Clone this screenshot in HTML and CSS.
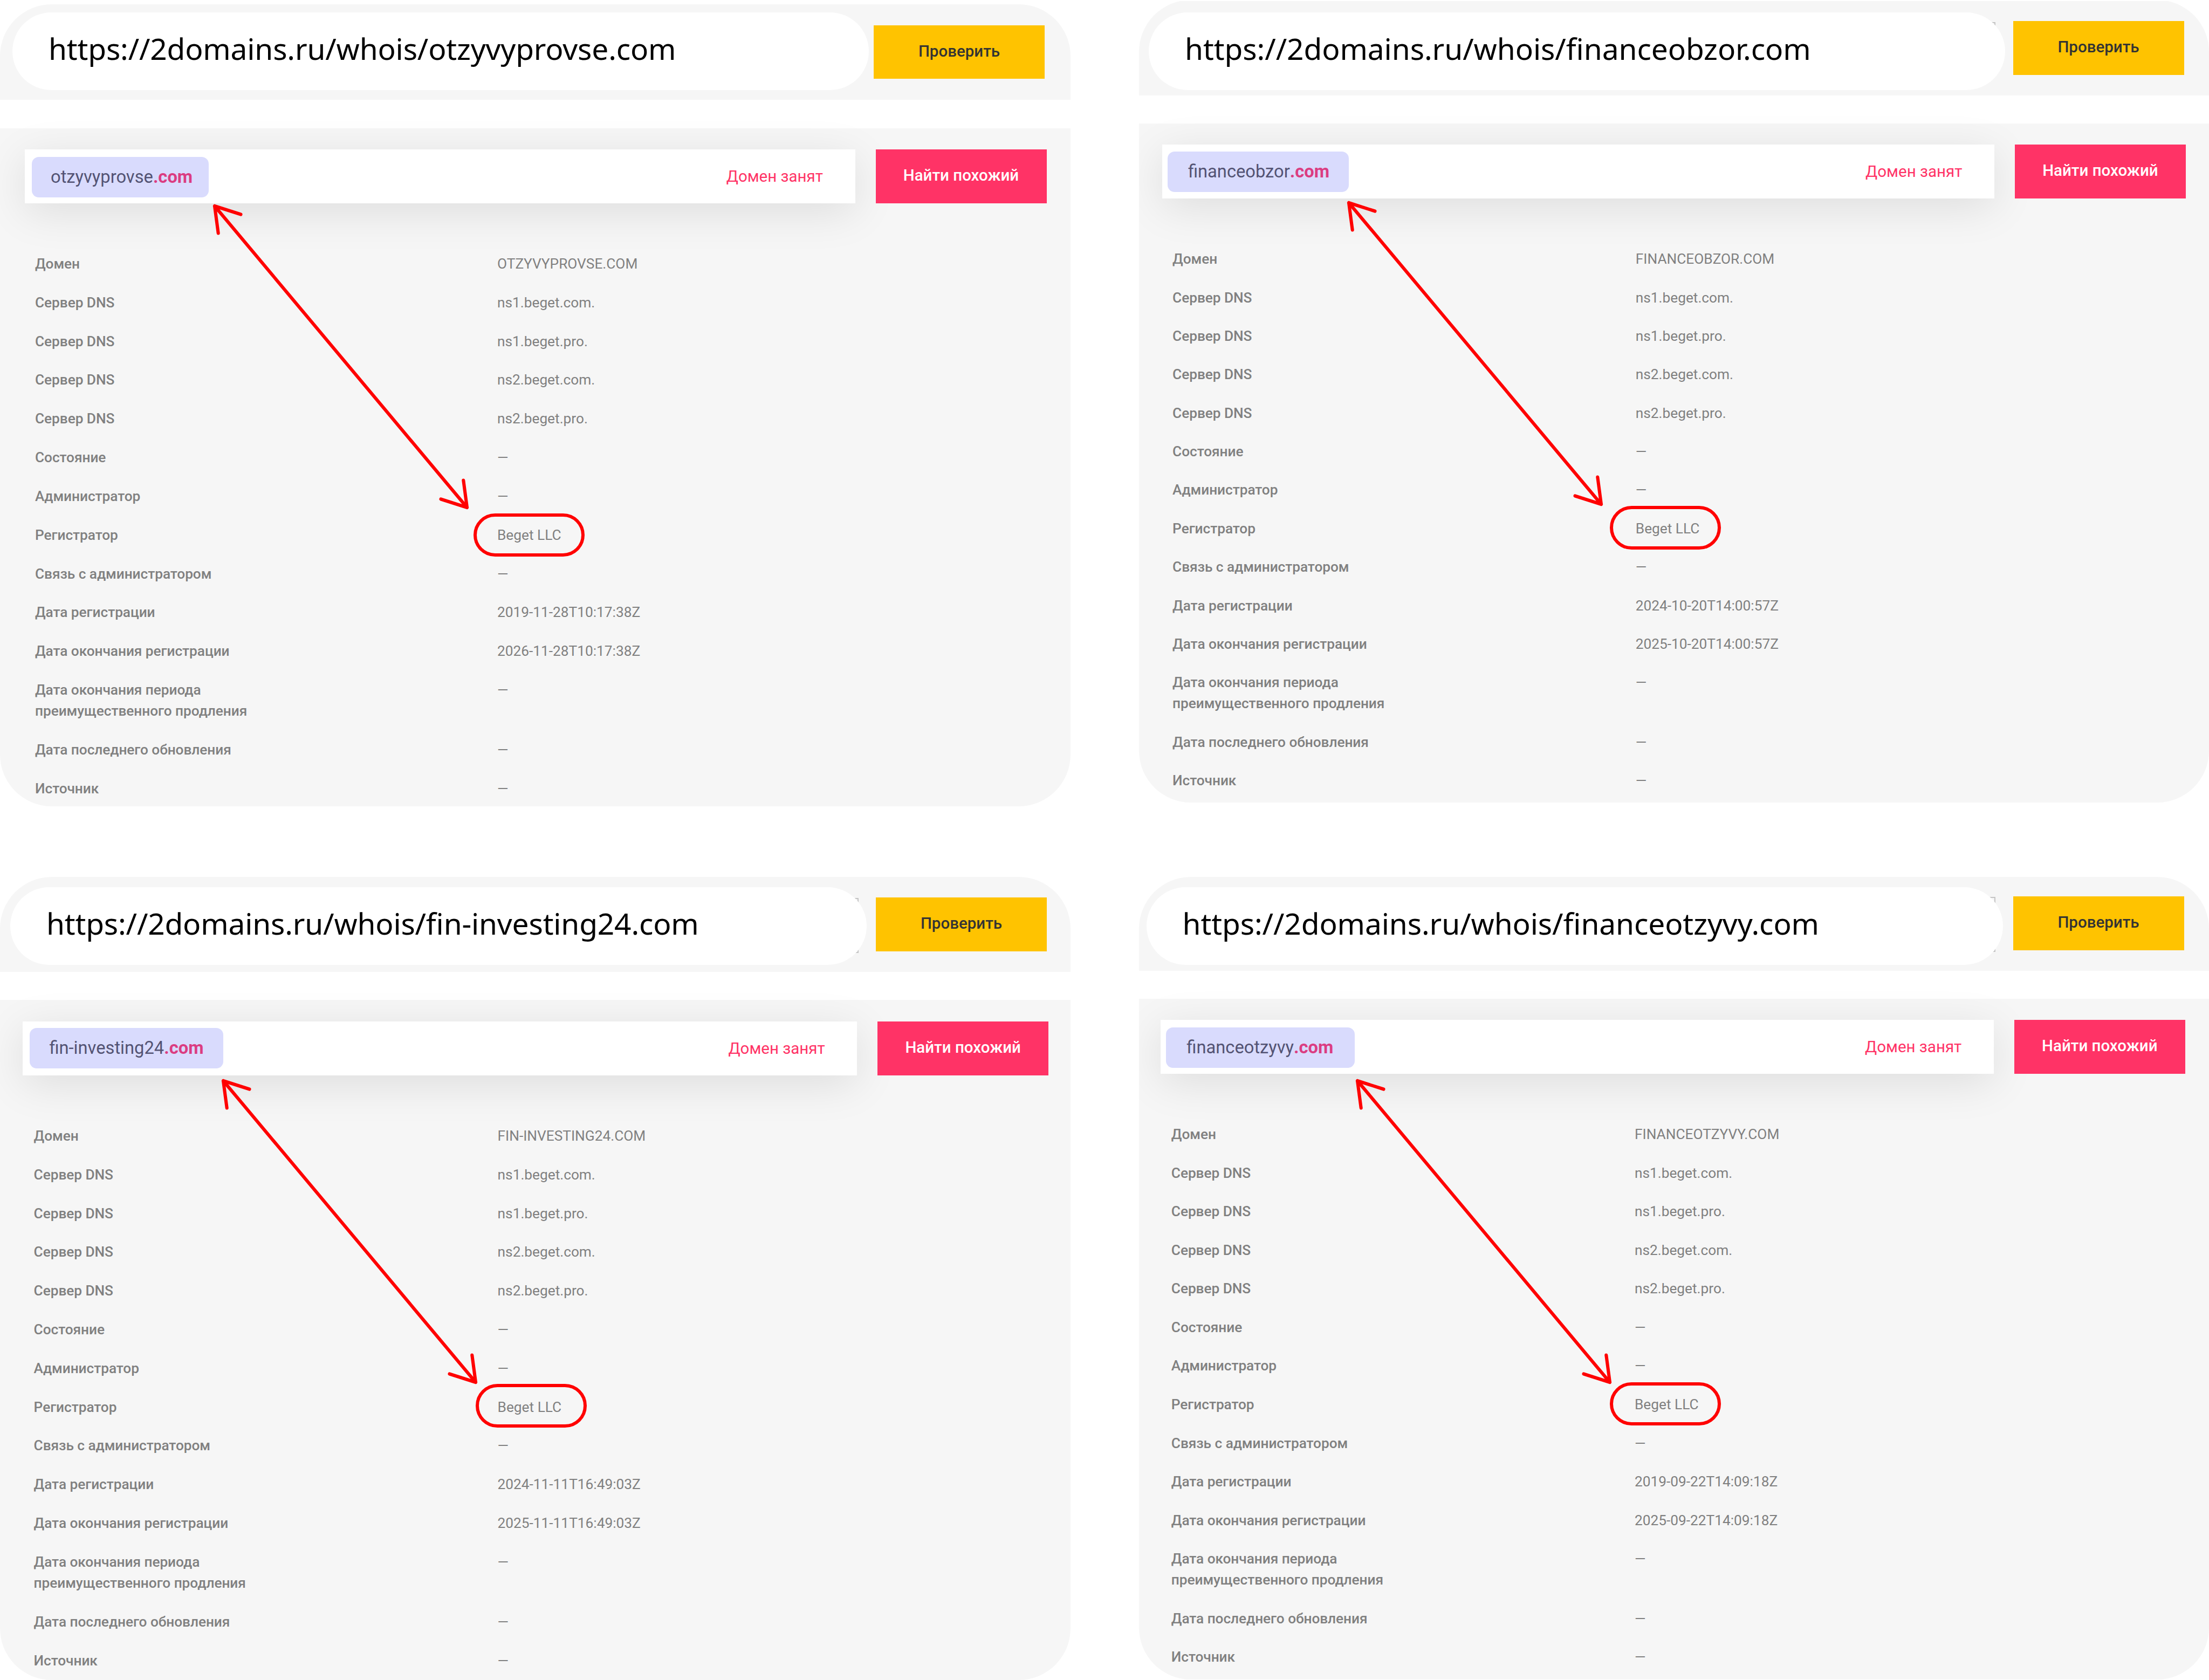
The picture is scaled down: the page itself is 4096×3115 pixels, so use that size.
FILE: index.html
```html
<!DOCTYPE html>
<html lang="ru">
<head>
<meta charset="utf-8">
<title>Whois</title>
<link rel="stylesheet" href="styles.css">
</head>
<body>
<svg class="defs" aria-hidden="true">
  <symbol id="arrow" viewBox="0 0 480 571">
    <path d="M54.5 21.5 6 6l6.7 50.4M6 6l468 559M425.5 549.5 474 565l-6.7-50.4" fill="none" stroke="#f00" stroke-width="6.1" stroke-linecap="round" stroke-linejoin="round"/>
  </symbol>
</svg>
<main class="page">

  <section class="shot shot-1">
    <header class="search">
      <div class="field"><div class="url">https://2domains.ru/whois/otzyvyprovse.com</div></div>
      <button class="btn btn-check">Проверить</button>
    </header>
    <div class="body">
      <div class="result">
        <div class="bar">
          <div class="chip"><span>otzyvyprovse<b>.com</b></span></div>
          <div class="status">Домен занят</div>
        </div>
        <button class="btn btn-find">Найти похожий</button>
      </div>
      <dl class="whois">
        <dt>Домен</dt><dd>OTZYVYPROVSE.COM</dd>
        <dt>Сервер DNS</dt><dd>ns1.beget.com.</dd>
        <dt>Сервер DNS</dt><dd>ns1.beget.pro.</dd>
        <dt>Сервер DNS</dt><dd>ns2.beget.com.</dd>
        <dt>Сервер DNS</dt><dd>ns2.beget.pro.</dd>
        <dt>Состояние</dt><dd>—</dd>
        <dt>Администратор</dt><dd>—</dd>
        <dt>Регистратор</dt><dd>Beget LLC</dd>
        <dt>Связь с администратором</dt><dd>—</dd>
        <dt>Дата регистрации</dt><dd>2019-11-28T10:17:38Z</dd>
        <dt>Дата окончания регистрации</dt><dd>2026-11-28T10:17:38Z</dd>
        <dt>Дата окончания периода<br>преимущественного продления</dt><dd>—</dd>
        <dt>Дата последнего обновления</dt><dd>—</dd>
        <dt>Источник</dt><dd>—</dd>
      </dl>
    </div>
    <svg class="arrow"><use href="#arrow"/></svg>
    <div class="oval"></div>
  </section>

  <section class="shot shot-2">
    <header class="search">
      <div class="field outlined"><div class="url">https://2domains.ru/whois/financeobzor.com</div></div>
      <button class="btn btn-check">Проверить</button>
    </header>
    <div class="body">
      <div class="result">
        <div class="bar">
          <div class="chip"><span>financeobzor<b>.com</b></span></div>
          <div class="status">Домен занят</div>
        </div>
        <button class="btn btn-find">Найти похожий</button>
      </div>
      <dl class="whois">
        <dt>Домен</dt><dd>FINANCEOBZOR.COM</dd>
        <dt>Сервер DNS</dt><dd>ns1.beget.com.</dd>
        <dt>Сервер DNS</dt><dd>ns1.beget.pro.</dd>
        <dt>Сервер DNS</dt><dd>ns2.beget.com.</dd>
        <dt>Сервер DNS</dt><dd>ns2.beget.pro.</dd>
        <dt>Состояние</dt><dd>—</dd>
        <dt>Администратор</dt><dd>—</dd>
        <dt>Регистратор</dt><dd>Beget LLC</dd>
        <dt>Связь с администратором</dt><dd>—</dd>
        <dt>Дата регистрации</dt><dd>2024-10-20T14:00:57Z</dd>
        <dt>Дата окончания регистрации</dt><dd>2025-10-20T14:00:57Z</dd>
        <dt>Дата окончания периода<br>преимущественного продления</dt><dd>—</dd>
        <dt>Дата последнего обновления</dt><dd>—</dd>
        <dt>Источник</dt><dd>—</dd>
      </dl>
    </div>
    <svg class="arrow"><use href="#arrow"/></svg>
    <div class="oval"></div>
  </section>

  <section class="shot shot-3">
    <header class="search">
      <div class="field outlined"><div class="url">https://2domains.ru/whois/fin-investing24.com</div></div>
      <button class="btn btn-check">Проверить</button>
    </header>
    <div class="body">
      <div class="result">
        <div class="bar">
          <div class="chip"><span>fin-investing24<b>.com</b></span></div>
          <div class="status">Домен занят</div>
        </div>
        <button class="btn btn-find">Найти похожий</button>
      </div>
      <dl class="whois">
        <dt>Домен</dt><dd>FIN-INVESTING24.COM</dd>
        <dt>Сервер DNS</dt><dd>ns1.beget.com.</dd>
        <dt>Сервер DNS</dt><dd>ns1.beget.pro.</dd>
        <dt>Сервер DNS</dt><dd>ns2.beget.com.</dd>
        <dt>Сервер DNS</dt><dd>ns2.beget.pro.</dd>
        <dt>Состояние</dt><dd>—</dd>
        <dt>Администратор</dt><dd>—</dd>
        <dt>Регистратор</dt><dd>Beget LLC</dd>
        <dt>Связь с администратором</dt><dd>—</dd>
        <dt>Дата регистрации</dt><dd>2024-11-11T16:49:03Z</dd>
        <dt>Дата окончания регистрации</dt><dd>2025-11-11T16:49:03Z</dd>
        <dt>Дата окончания периода<br>преимущественного продления</dt><dd>—</dd>
        <dt>Дата последнего обновления</dt><dd>—</dd>
        <dt>Источник</dt><dd>—</dd>
      </dl>
    </div>
    <svg class="arrow"><use href="#arrow"/></svg>
    <div class="oval"></div>
  </section>

  <section class="shot shot-4">
    <header class="search">
      <div class="field outlined"><div class="url">https://2domains.ru/whois/financeotzyvy.com</div></div>
      <button class="btn btn-check">Проверить</button>
    </header>
    <div class="body">
      <div class="result">
        <div class="bar">
          <div class="chip"><span>financeotzyvy<b>.com</b></span></div>
          <div class="status">Домен занят</div>
        </div>
        <button class="btn btn-find">Найти похожий</button>
      </div>
      <dl class="whois">
        <dt>Домен</dt><dd>FINANCEOTZYVY.COM</dd>
        <dt>Сервер DNS</dt><dd>ns1.beget.com.</dd>
        <dt>Сервер DNS</dt><dd>ns1.beget.pro.</dd>
        <dt>Сервер DNS</dt><dd>ns2.beget.com.</dd>
        <dt>Сервер DNS</dt><dd>ns2.beget.pro.</dd>
        <dt>Состояние</dt><dd>—</dd>
        <dt>Администратор</dt><dd>—</dd>
        <dt>Регистратор</dt><dd>Beget LLC</dd>
        <dt>Связь с администратором</dt><dd>—</dd>
        <dt>Дата регистрации</dt><dd>2019-09-22T14:09:18Z</dd>
        <dt>Дата окончания регистрации</dt><dd>2025-09-22T14:09:18Z</dd>
        <dt>Дата окончания периода<br>преимущественного продления</dt><dd>—</dd>
        <dt>Дата последнего обновления</dt><dd>—</dd>
        <dt>Источник</dt><dd>—</dd>
      </dl>
    </div>
    <svg class="arrow"><use href="#arrow"/></svg>
    <div class="oval"></div>
  </section>

</main>
</body>
</html>
```
FILE: styles.css
```css
* { box-sizing: border-box; }

body {
  margin: 0;
  background: #fff;
  font-family: Roboto, "Liberation Sans", sans-serif;
}

.defs { display: block; width: 0; height: 0; }

.page {
  display: grid;
  grid-template-columns: 1984.5px 1984.5px;
  grid-template-rows: 1611px 1504px;
  column-gap: 127px;
  align-items: start;
  width: 4096px;
  height: 3115px;
  overflow: hidden;
}

/* One whois capture: search strip, white gap, result body */
.shot {
  position: relative;
  border-radius: 96px;
  overflow: hidden;
}

.search {
  display: flex;
  align-items: flex-start;
  height: var(--search-h);
  padding-left: var(--field-x);
  background: #f6f6f6;
}

.field {
  position: relative;
  width: 1588px;
  height: 144px;
  margin-top: var(--field-y);
  flex: none;
}

/* Edge of the native input that sits under the rounded address field */
.outlined::before {
  content: "";
  position: absolute;
  top: var(--outline-y);
  right: var(--outline-r);
  width: 200px;
  height: 98px;
  border: 2px solid #c4c4c4;
}

.url {
  position: relative;
  display: flex;
  align-items: center;
  height: 100%;
  padding: 0 0 11px 67px;
  border-radius: 72px;
  background: #fff;
  color: #000;
  font-family: "Noto Sans", "Open Sans", sans-serif;
  font-size: 55px;
  letter-spacing: var(--url-track);
  white-space: nowrap;
}

.btn {
  flex: none;
  border: 0;
  padding: 0 0 3px;
  font: 500 29.5px Roboto, "Liberation Sans", sans-serif;
  white-space: nowrap;
}

.btn-check {
  width: 317px;
  height: 99.5px;
  margin: var(--check-y) 0 0 var(--check-gap);
  background: #ffc300;
  color: #333;
}

.btn-find {
  width: 317px;
  height: 99.5px;
  margin-left: 38px;
  background: #ff3366;
  color: #fff;
}

.body {
  height: var(--body-h);
  margin-top: var(--body-gap);
  padding-top: var(--bar-y);
  background: #f6f6f6;
}

.result {
  display: flex;
  padding-left: var(--bar-x);
}

.bar {
  display: flex;
  justify-content: space-between;
  align-items: flex-start;
  flex: none;
  width: var(--bar-w);
  height: 99.5px;
  padding: var(--chip-y) 59.5px 0 var(--chip-x);
  background: #fff;
  box-shadow: 0 16px 80px rgba(0, 0, 0, .1);
}

.chip {
  width: var(--chip-w);
  height: 75px;
  padding: var(--chip-text) 0 0 var(--chip-pad);
  border-radius: 13px;
  background: #d9dbfd;
  color: #535373;
  font-size: 32.7px;
  line-height: 75px;
  white-space: nowrap;
}

.chip b { color: #db3d82; font-weight: 700; }

.status {
  align-self: flex-start;
  margin-top: calc(0.5px - var(--chip-y));
  color: #ff3366;
  font-size: 29.5px;
  line-height: 99.5px;
}

.whois {
  display: grid;
  grid-template-columns: var(--value-x) auto;
  row-gap: var(--row-gap);
  margin: 93.5px 0 0;
  padding-left: var(--label-x);
  color: #808080;
  font-size: 26.25px;
  line-height: var(--line);
}

.whois dt { font-weight: 500; letter-spacing: -0.05px; }
.whois dd { margin: 0; }

/* Hand-drawn marks over the capture */
.arrow {
  position: absolute;
  left: var(--arrow-x);
  top: var(--arrow-y);
  width: 480px;
  height: 571px;
}

.oval {
  position: absolute;
  left: var(--oval-x);
  top: var(--oval-y);
  width: 206px;
  height: 80.4px;
  border: 6px solid #f00;
  border-radius: 41px;
}

.shot-1 {
  margin-top: 8px;
  --url-track: -0.16px;
  --search-h: 177px; --field-x: 23px; --field-y: 14.5px;
  --check-y: 38.6px; --check-gap: 9px;
  --body-gap: 53px; --body-h: 1257px;
  --bar-y: 39px; --bar-x: 46px; --bar-w: 1539.5px;
  --chip-x: 13px; --chip-y: 14px; --chip-w: 327.5px; --chip-text: 0; --chip-pad: 35px;
  --label-x: 65px; --value-x: 857px; --line: 39.2px; --row-gap: 32.64px;
  --arrow-x: 392px; --arrow-y: 367.8px; --oval-x: 877.7px; --oval-y: 944.1px;
}

.shot-2 {
  padding-top: 2px;
  --url-track: -0.06px;
  --search-h: 175.4px; --field-x: 18.5px; --field-y: 20.5px;
  --outline-y: 18.5px; --outline-r: 18px;
  --check-y: 37px; --check-gap: 14.5px;
  --body-gap: 51.5px; --body-h: 1259.5px;
  --bar-y: 39.3px; --bar-x: 43.4px; --bar-w: 1543px;
  --chip-x: 10px; --chip-y: 13px; --chip-w: 336px; --chip-text: 0; --chip-pad: 38px;
  --label-x: 62.6px; --value-x: 858.7px; --line: 39px; --row-gap: 32.38px;
  --arrow-x: 383.4px; --arrow-y: 370.1px; --oval-x: 873.3px; --oval-y: 938.4px;
}

.shot-3 {
  margin-top: 15px;
  --url-track: -0.17px;
  --search-h: 176px; --field-x: 19px; --field-y: 18.5px;
  --outline-y: 20px; --outline-r: 15px;
  --check-y: 38px; --check-gap: 17px;
  --body-gap: 52px; --body-h: 1261px;
  --bar-y: 40px; --bar-x: 42.4px; --bar-w: 1546.8px;
  --chip-x: 13px; --chip-y: 11.5px; --chip-w: 358.5px; --chip-text: 0; --chip-pad: 36px;
  --label-x: 62.6px; --value-x: 860px; --line: 39.3px; --row-gap: 32.5px;
  --arrow-x: 408.2px; --arrow-y: 372.1px; --oval-x: 882px; --oval-y: 940.4px;
}

.shot-4 {
  margin-top: 15px;
  --url-track: -0.09px;
  --search-h: 174px; --field-x: 14px; --field-y: 18.5px;
  --outline-y: 18.5px; --outline-r: 14px;
  --check-y: 36px; --check-gap: 19px;
  --body-gap: 52px; --body-h: 1261.5px;
  --bar-y: 39.2px; --bar-x: 40.8px; --bar-w: 1544.5px;
  --chip-x: 10px; --chip-y: 13.7px; --chip-w: 350px; --chip-text: 0; --chip-pad: 38px;
  --label-x: 60.3px; --value-x: 859.2px; --line: 39px; --row-gap: 32.55px;
  --arrow-x: 399.6px; --arrow-y: 372.1px; --oval-x: 873px; --oval-y: 936.6px;
}
```
